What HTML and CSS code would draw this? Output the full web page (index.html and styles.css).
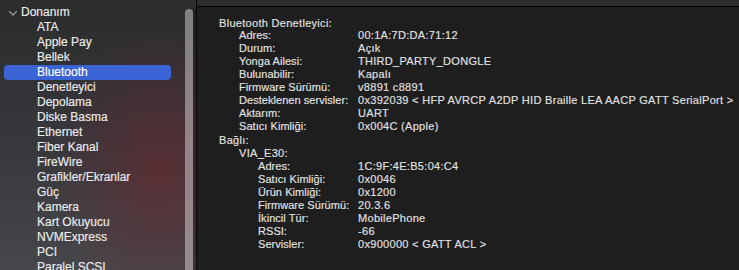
FILE: index.html
```html
<!doctype html>
<html lang="tr">
<head>
  <meta charset="utf-8" />
  <title>Sistem Bilgisi</title>
  <link rel="stylesheet" href="styles.css">
</head>
<body>

<div class="window">
  <aside class="sidebar">
    <ul class="tree">
      <li class="group">
        <svg class="chevron" width="8" height="5" viewBox="0 0 8 5"><path d="M0.6 0.6 L4 4 L7.4 0.6" /></svg>
        <span>Donanım</span>
      </li>
      <li>ATA</li>
      <li>Apple Pay</li>
      <li>Bellek</li>
      <li class="selected">Bluetooth</li>
      <li>Denetleyici</li>
      <li>Depolama</li>
      <li>Diske Basma</li>
      <li>Ethernet</li>
      <li>Fiber Kanal</li>
      <li>FireWire</li>
      <li>Grafikler/Ekranlar</li>
      <li>Güç</li>
      <li>Kamera</li>
      <li>Kart Okuyucu</li>
      <li>NVMExpress</li>
      <li>PCI</li>
      <li>Paralel SCSI</li>
    </ul>
    <div class="scroller"><div class="thumb"></div></div>
  </aside>

  <main class="detail">
    <div class="topbar"></div>
    <div class="report">
      <div class="heading">Bluetooth Denetleyici:</div>
      <dl class="props props-controller">
        <dt>Adres:</dt><dd>00:1A:7D:DA:71:12</dd>
        <dt>Durum:</dt><dd>Açık</dd>
        <dt>Yonga Ailesi:</dt><dd>THIRD_PARTY_DONGLE</dd>
        <dt>Bulunabilir:</dt><dd>Kapalı</dd>
        <dt>Firmware Sürümü:</dt><dd>v8891 c8891</dd>
        <dt>Desteklenen servisler:</dt><dd>0x392039 &lt; HFP AVRCP A2DP HID Braille LEA AACP GATT SerialPort &gt;</dd>
        <dt>Aktarım:</dt><dd>UART</dd>
        <dt>Satıcı Kimliği:</dt><dd>0x004C (Apple)</dd>
      </dl>
      <div class="heading">Bağlı:</div>
      <div class="device">VIA_E30:</div>
      <dl class="props props-device">
        <dt>Adres:</dt><dd>1C:9F:4E:B5:04:C4</dd>
        <dt>Satıcı Kimliği:</dt><dd>0x0046</dd>
        <dt>Ürün Kimliği:</dt><dd>0x1200</dd>
        <dt>Firmware Sürümü:</dt><dd>20.3.6</dd>
        <dt>İkincil Tür:</dt><dd>MobilePhone</dd>
        <dt>RSSI:</dt><dd>-66</dd>
        <dt>Servisler:</dt><dd>0x900000 &lt; GATT ACL &gt;</dd>
      </dl>
    </div>
  </main>
</div>

</body>
</html>
```

FILE: styles.css
```css
html,
body {
  margin: 0;
  padding: 0;
  height: 100%;
  overflow: hidden;
}
body {
  font-family: "Liberation Sans", Arial, sans-serif;
  background-color: #1e1e1e;
  color: #e2e2e2;
}
.window {
  display: flex;
  height: 270px;
}

/* sidebar */
.sidebar {
  display: flex;
  width: 196px;
  flex: none;
  border-right: 1px solid #050505;
  background:
    radial-gradient(ellipse 110px 150px at 160px 170px, rgba(112, 38, 44, 0.55), rgba(112, 38, 44, 0)),
    linear-gradient(to bottom, #2b2c2c 0%, #34363a 45%, #46474b 100%);
}
.tree {
  list-style: none;
  margin: 0;
  padding: 5px 0 0 4px;
  flex: 1;
  font-size: 12px;
  color: #ececec;
  -webkit-text-stroke: 0.15px currentColor;
}
.tree li {
  height: 15px;
  line-height: 15px;
  padding-left: 33px;
  margin-right: 14px;
  white-space: nowrap;
}
.tree li.group {
  display: flex;
  align-items: center;
  padding-left: 5px;
  gap: 4px;
}
.chevron {
  fill: none;
  stroke: #a0a0a0;
  stroke-width: 1.3;
  stroke-linecap: round;
  stroke-linejoin: round;
  margin-top: 1px;
}
.tree li.selected {
  background-color: #3a64d6;
  border-radius: 4px;
  color: #ffffff;
}
.scroller {
  width: 11px;
  flex: none;
  padding-top: 9px;
  display: flex;
}
.thumb {
  width: 8px;
  background-color: rgba(255, 255, 255, 0.4);
  border-radius: 4px 4px 0 0;
}
.scroller::after {
  content: "";
  width: 3px;
  background-color: rgba(0, 0, 0, 0.25);
}

/* detail */
.detail {
  flex: 1;
  display: flex;
  flex-direction: column;
}
.topbar {
  height: 6px;
  background-color: #2c2c2c;
  border-bottom: 1px solid #050505;
}
.report {
  padding: 10px 0 0 22px;
  font-size: 11px;
  line-height: 13.1px;
  letter-spacing: 0.3px;
  white-space: nowrap;
  -webkit-text-stroke: 0.15px currentColor;
}
.heading {
  height: 13.1px;
}
.heading:first-child {
  height: 11.8px;
}
.device {
  padding-left: 20px;
}
.props {
  display: grid;
  margin: 0;
}
.props dt,
.props dd {
  margin: 0;
}
.props dt {
  letter-spacing: 0.05px;
}
.props-controller {
  grid-template-columns: 119px auto;
  padding-left: 20px;
}
.props-device {
  grid-template-columns: 100px auto;
  padding-left: 39px;
}
```
